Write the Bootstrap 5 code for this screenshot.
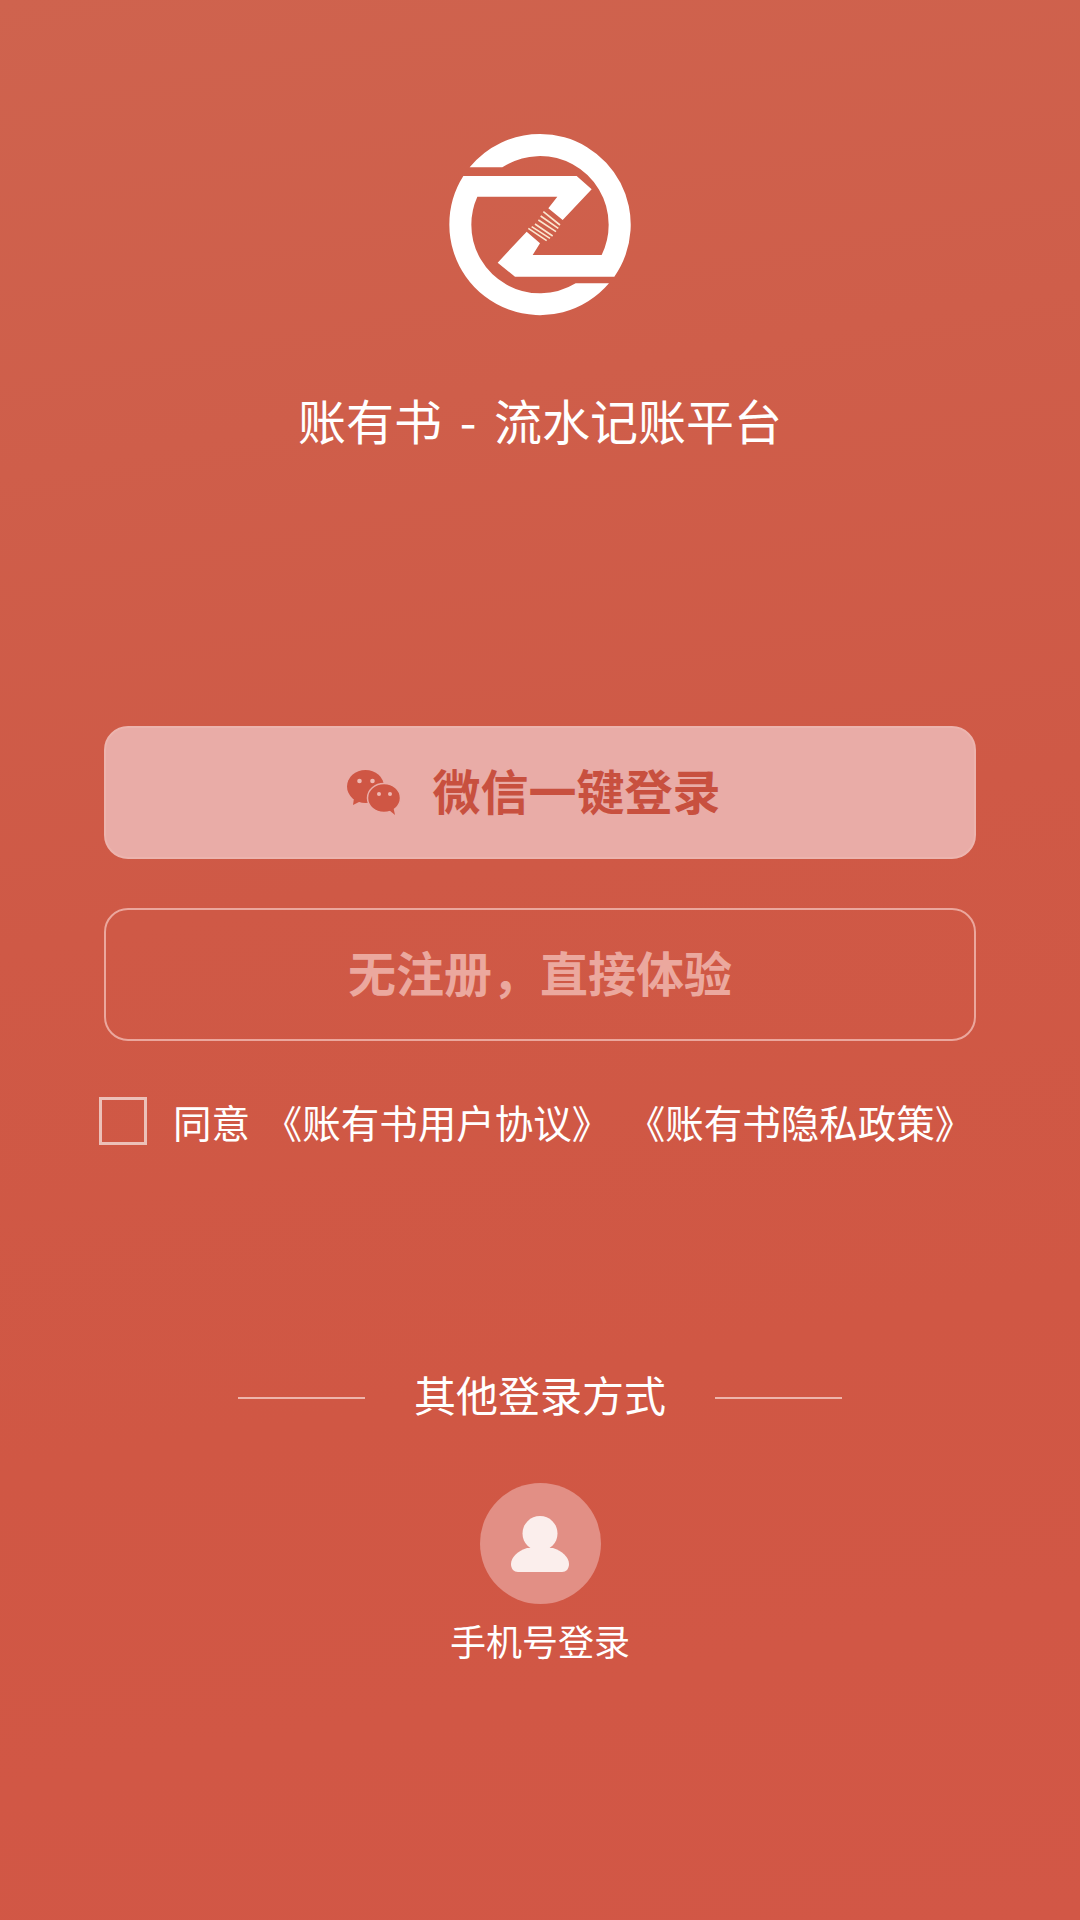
<!DOCTYPE html>
<html lang="zh-CN">
<head>
    <meta charset="UTF-8">
    <meta name="viewport" content="width=device-width, initial-scale=1">
    <title>账有书 - 流水记账平台</title>
    <link href="https://cdn.jsdelivr.net/npm/bootstrap@5.3.3/dist/css/bootstrap.min.css" rel="stylesheet">
    <style>
        body {
            min-height: 1920px;
            background: linear-gradient(170deg, #cf634e 0%, #cf5946 45%, #d05744 70%, #d25746 100%);
            font-family: "Noto Sans CJK SC", "Noto Sans", sans-serif;
            color: #fff;
        }
        .login-page { padding-top: 110px; }
        .logo-svg { display: block; width: 240px; height: 220px; }
        .app-title { margin: 62px 0 0; height: 60px; line-height: 54px; font-size: 48px; font-weight: 400; white-space: nowrap; word-spacing: 7px; }
        .login-actions { width: 872px; margin-top: 274px; gap: 49px; }
        .btn.login-btn {
            height: 133px; border-radius: 24px; font-size: 48px; font-weight: 700; line-height: 1;
            gap: 31px; padding: 0 0 7px; --bs-btn-border-width: 2px;
        }
        .btn.login-wechat { background: #e9aca7; border-color: #ecb4ae; color: #c8503f; padding-right: 12px; }
        .btn.login-guest { background: transparent; border-color: #eba79d; color: #eba89e; }
        .wechat-icon { margin-top: 7px; }
        .agree-row { width: 882px; margin-top: 56px; gap: 26px; font-size: 38.5px; line-height: 44px; white-space: nowrap; }
        .agree-check.form-check-input {
            width: 48px; height: 48px; margin: 0; flex: none; background-color: transparent;
            border: 3px solid #ecc0b8; border-radius: 0;
        }
        .agree-doc-a { margin-left: 5px; }
        .agree-doc-b { margin-left: 8px; }
        .other-title { margin-top: 228px; gap: 49px; height: 50px; font-size: 42px; line-height: 42px; }
        .other-title-text { height: 50px; }
        .other-line { width: 127px; height: 2px; background: #eeb5ab; }
        .phone-circle { width: 121px; height: 121px; margin-top: 60px; background: #e28f85; }
        .phone-label { margin-top: 16px; font-size: 36px; line-height: 40px; }
    </style>
</head>
<body>
<main class="login-page d-flex flex-column align-items-center">
    <!-- logo -->
    <svg class="logo-svg" viewBox="0 0 720 660" aria-label="账有书">
        <g fill="#fff">
            <path d="M149 172A272 272 0 0 1 360 72A272 272 0 0 1 583 500H285L233 458L320 365L360 400L338 435H545A206 206 0 0 0 566 344A206 206 0 0 0 247 172Z"/>
            <path d="M130 198H470L515 238L428 330L385 295L412 260H172A206 206 0 0 0 154 344A206 206 0 0 0 467 520H567A272 272 0 0 1 88 344A272 272 0 0 1 130 198Z"/>
        </g>
        <g stroke="#fbe6cf" stroke-width="5" fill="none">
            <path d="M370 305L420 345M362 318L415 355M355 330L408 365M345 342L398 378M335 350L390 385M325 355L380 392"/>
        </g>
    </svg>
    <h1 class="app-title">账有书 - 流水记账平台</h1>

    <div class="login-actions d-flex flex-column">
        <button type="button" class="btn login-btn login-wechat d-flex align-items-center justify-content-center">
            <svg class="wechat-icon" width="54" height="46" viewBox="0 0 54 46">
                <ellipse cx="18.500" cy="16.500" rx="18.500" ry="16.500" fill="#cf5644"/>
                <path fill="#cf5644" d="M7 28L6 35L14 31Z"/>
                <ellipse cx="37" cy="28" rx="16.500" ry="14.500" fill="#cf5644" stroke="#e9aca7" stroke-width="1.500"/>
                <path fill="#cf5644" d="M42 40L48 45L46.500 38Z"/>
                <g fill="#eeb8b2">
                    <circle cx="12.500" cy="11" r="2.300"/><circle cx="25.500" cy="11" r="2.300"/>
                    <circle cx="32" cy="24" r="2"/><circle cx="43" cy="24" r="2"/>
                </g>
            </svg>
            <span>微信一键登录</span>
        </button>
        <button type="button" class="btn login-btn login-guest d-flex align-items-center justify-content-center">无注册，直接体验</button>
    </div>

    <label class="agree-row d-flex align-items-center">
        <input type="checkbox" class="form-check-input agree-check">
        <span>同意 <span class="agree-doc-a">《账有书用户协议》</span> <span class="agree-doc-b">《账有书隐私政策》</span></span>
    </label>

    <div class="other-title d-flex align-items-center">
        <span class="other-line"></span>
        <span class="other-title-text">其他登录方式</span>
        <span class="other-line"></span>
    </div>

    <div class="phone-circle rounded-circle d-flex align-items-center justify-content-center">
        <svg width="58" height="56" viewBox="0 0 58 56">
            <circle cx="29" cy="17.500" r="17.500" fill="#fbeeec"/>
            <path fill="#fbeeec" d="M0 48C0 41 7 35 16 32H42C51 35 58 41 58 48C58 53 55 56 51 56H7C3 56 0 53 0 48Z"/>
        </svg>
    </div>
    <div class="phone-label">手机号登录</div>
</main>
<script src="https://cdn.jsdelivr.net/npm/bootstrap@5.3.3/dist/js/bootstrap.bundle.min.js"></script>
</body>
</html>
